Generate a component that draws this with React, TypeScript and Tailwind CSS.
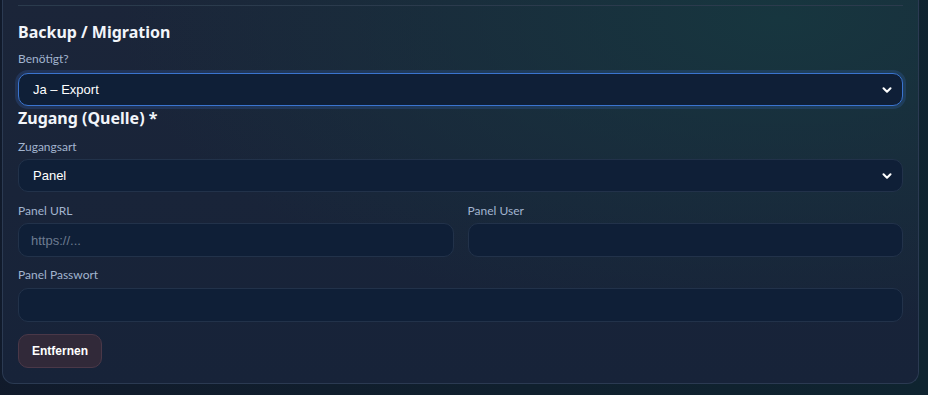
import { ChevronDown } from 'lucide-react';

const Label = ({ children }: { children: React.ReactNode }) => (
  <label
    className="block text-[12px] leading-4 text-[#a2b4cf]"
    style={{ fontFamily: 'Lato, "Noto Sans", sans-serif' }}
  >
    {children}
  </label>
);

const Select = ({ value, focused }: { value: string; focused?: boolean }) => (
  <div className="relative">
    <select
      defaultValue={value}
      className={
        'block w-full h-[33px] appearance-none rounded-[10px] bg-[#0f1f37] pl-[14px] pr-8 text-[13px] text-white outline-none ' +
        (focused
          ? 'border border-[#3a74cf] shadow-[0_0_0_3px_rgba(59,110,200,0.22)]'
          : 'border border-[#22324a]')
      }
      style={{ fontFamily: '"Liberation Sans", Arial, sans-serif' }}
    >
      <option>{value}</option>
    </select>
    <ChevronDown
      className="pointer-events-none absolute right-[9px] top-1/2 -translate-y-1/2 text-white"
      size={14}
      strokeWidth={3.5}
    />
  </div>
);

const Input = ({ placeholder }: { placeholder?: string }) => (
  <input
    placeholder={placeholder}
    className="block w-full h-[34px] rounded-[10px] border border-[#22324a] bg-[#0f1f37] px-[12px] text-[13px] text-white outline-none placeholder:text-[#6d7c91]"
    style={{ fontFamily: '"Liberation Sans", Arial, sans-serif' }}
  />
);

export default function App() {
  return (
    <div
      className="h-[395px] w-[928px] overflow-hidden bg-[linear-gradient(100deg,#111a2b_0%,#10202e_60%,#0f2430_100%)] pl-[2px] pr-[9px]"
      style={{ fontFamily: '"Noto Sans", "Open Sans", sans-serif' }}
    >
      <div className="rounded-b-[12px] border border-t-0 border-[#2b3a52] bg-[radial-gradient(ellipse_at_85%_5%,#17363f_0%,rgba(23,54,63,0)_60%),linear-gradient(180deg,#1b2539_0%,#172339_100%)] px-[15px] pt-[5px] pb-[15px]">
        <div className="border-t border-[#2b3b4d]" />

        <h2 className="mt-[14px] text-[16px] font-bold leading-6 text-[#f2f5fa]">Backup / Migration</h2>
        <div className="mt-[7px]">
          <Label>Benötigt?</Label>
        </div>
        <div className="mt-[6px]">
          <Select value="Ja – Export" focused />
        </div>

        <h2 className="mt-0 text-[16px] font-bold leading-6 text-[#f2f5fa]">Zugang (Quelle) *</h2>
        <div className="mt-[9px]">
          <Label>Zugangsart</Label>
        </div>
        <div className="mt-[4px]">
          <Select value="Panel" />
        </div>

        <div className="mt-[11px] grid grid-cols-2 gap-x-[14px]">
          <div>
            <Label>Panel URL</Label>
            <div className="mt-[4px]">
              <Input placeholder="https://..." />
            </div>
          </div>
          <div>
            <Label>Panel User</Label>
            <div className="mt-[4px]">
              <Input />
            </div>
          </div>
        </div>

        <div className="mt-[10px]">
          <Label>Panel Passwort</Label>
          <div className="mt-[5px]">
            <Input />
          </div>
        </div>

        <button
          className="mt-[12px] h-[34px] rounded-[10px] border border-[#4a3848] bg-[#312939] px-[13px] text-[12px] font-bold text-white"
          style={{ fontFamily: '"Liberation Sans", Arial, sans-serif' }}
        >
          Entfernen
        </button>
      </div>
    </div>
  );
}
